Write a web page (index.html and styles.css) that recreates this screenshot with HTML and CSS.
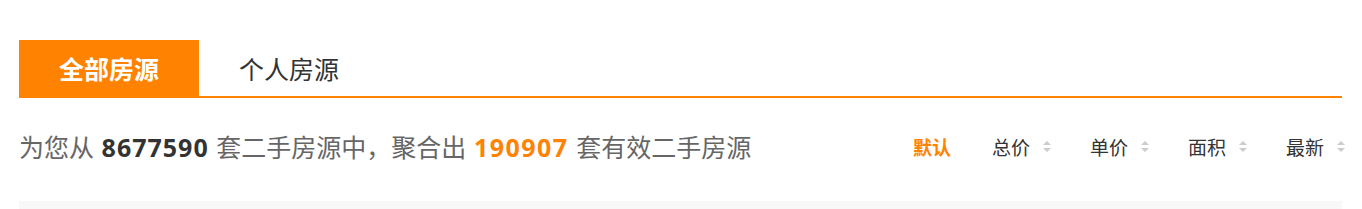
FILE: index.html
```html
<!DOCTYPE html>
<html lang="zh-CN">
<head>
  <meta charset="UTF-8">
  <meta name="viewport" content="width=device-width, initial-scale=1.0">
  <title>二手房源</title>
  <link rel="stylesheet" href="styles.css">
</head>
<body>
  <div class="container">
    <div class="tabs">
      <a class="tab active" href="#">全部房源</a>
      <a class="tab" href="#">个人房源</a>
    </div>
    <div class="summary">
      <p class="total">为您从 <strong class="num">8677590</strong> 套二手房源中，聚合出 <strong class="num hot">190907</strong> 套有效二手房源</p>
      <ul class="sort">
        <li class="sort-item current">默认</li>
        <li class="sort-item">总价<span class="arrows"></span></li>
        <li class="sort-item">单价<span class="arrows"></span></li>
        <li class="sort-item">面积<span class="arrows"></span></li>
        <li class="sort-item">最新<span class="arrows"></span></li>
      </ul>
    </div>
    <div class="list"></div>
  </div>
</body>
</html>
```

FILE: styles.css
```css
body {
  font-family: "Noto Sans CJK SC", "Noto Sans", sans-serif;
  margin: 0;
  padding: 0;
  background-color: #fff;
}

.container {
  margin: 0 20px 0 19px;
  padding-top: 40px;
}

.tabs {
  display: flex;
  border-bottom: 2px solid #ff8200;
}

.tab {
  width: 180px;
  height: 56px;
  display: flex;
  align-items: center;
  justify-content: center;
  font-size: 25px;
  color: #333;
  text-decoration: none;
}

.tab.active {
  background-color: #ff8200;
  color: #fff;
  font-weight: bold;
}

.summary {
  display: flex;
  align-items: center;
  justify-content: space-between;
  height: 96px;
  padding-bottom: 7px;
}

.total {
  margin: 0;
  font-size: 25px;
  color: #666;
  word-spacing: 2px;
}

.num {
  font-family: "Open Sans", sans-serif;
  color: #333;
  font-size: 25px;
  letter-spacing: 1px;
}

.num.hot {
  color: #ff8200;
  letter-spacing: 1.5px;
}

.sort {
  display: flex;
  align-items: center;
  gap: 39px;
  list-style: none;
  margin: 0 -3px 0 0;
  padding: 0;
}

.sort-item {
  display: flex;
  align-items: center;
  font-size: 19px;
  color: #333;
  cursor: pointer;
}

.sort-item.current {
  color: #ff8200;
  font-weight: bold;
  margin-right: 2px;
}

.arrows {
  display: inline-block;
  position: relative;
  width: 8px;
  height: 11px;
  margin-left: 13px;
}

.arrows::before,
.arrows::after {
  content: "";
  position: absolute;
  left: 0;
  border-left: 4px solid transparent;
  border-right: 4px solid transparent;
}

.arrows::before {
  top: 0;
  border-bottom: 4px solid #ccc;
}

.arrows::after {
  bottom: 0;
  border-top: 4px solid #ccc;
}

.list {
  height: 20px;
  background-color: #f8f8f8;
}
```
